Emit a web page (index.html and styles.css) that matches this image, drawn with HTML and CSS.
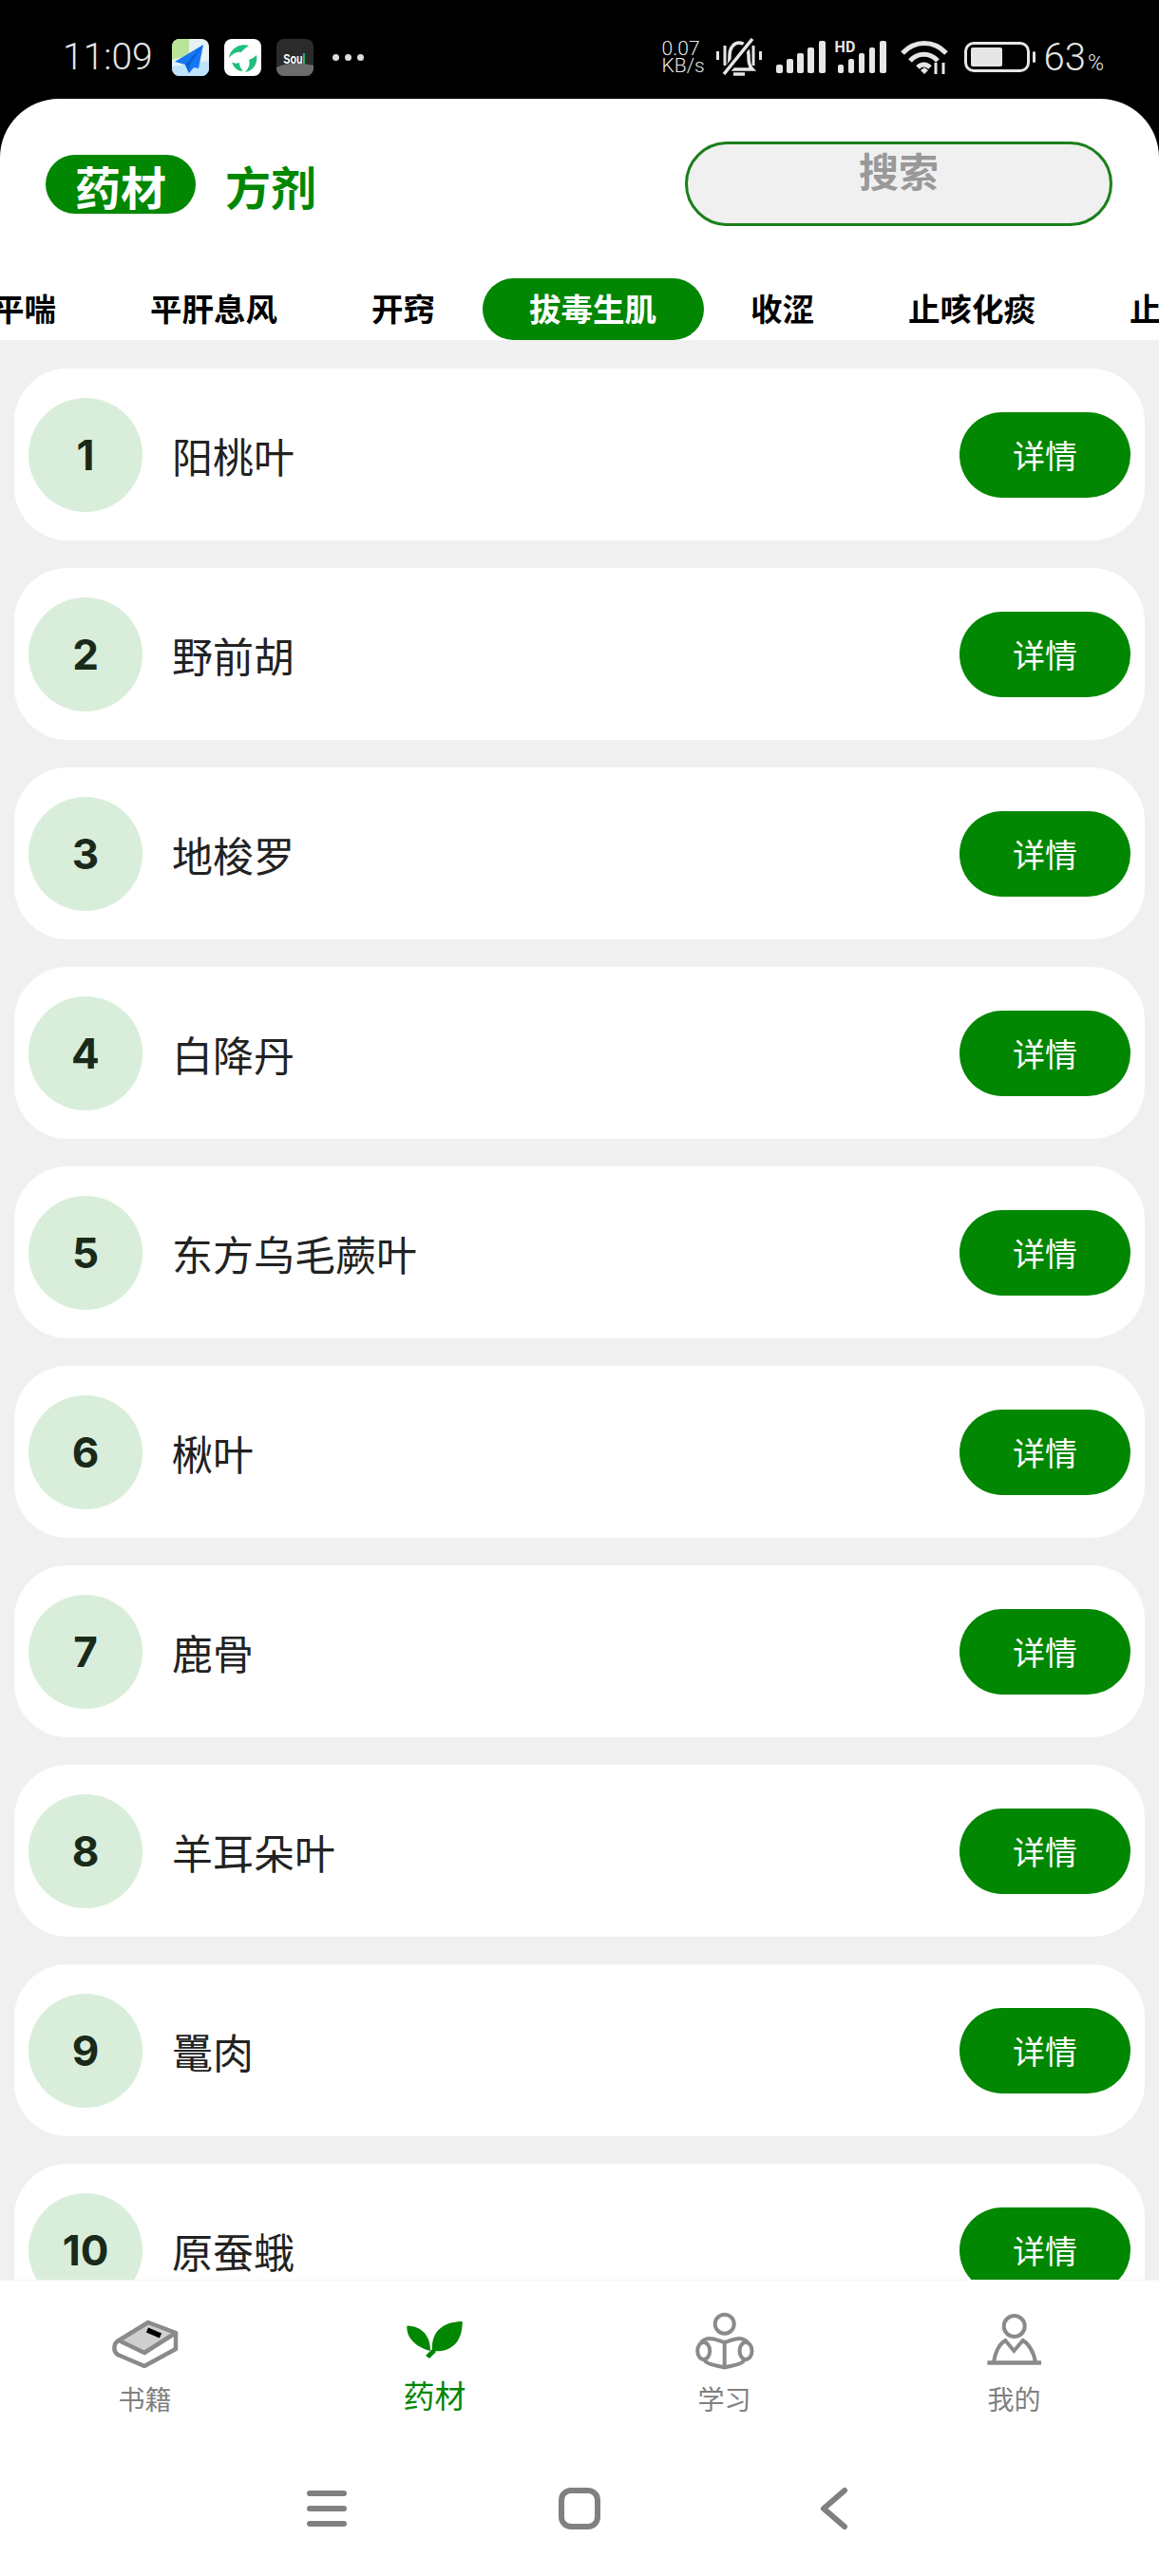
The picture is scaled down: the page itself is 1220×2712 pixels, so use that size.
FILE: index.html
```html
<!DOCTYPE html>
<html lang="zh-CN">
<head>
    <meta charset="UTF-8">
    <meta name="viewport" content="width=device-width, initial-scale=1.0">
    <title>药材</title>
    <link rel="stylesheet" href="styles.css">
</head>
<body>

<div class="phone">
    <div class="status-bar">
        <div class="status-left">
            <span class="clock">11:09</span>
            <svg class="app-icon" viewBox="0 0 39 39">
                <rect width="39" height="39" rx="8" fill="#e6f2f4"/>
                <path d="M0 8a8 8 0 0 1 8-8h10v17L0 22z" fill="#b9e59a"/>
                <path d="M0 29l39-6v8a8 8 0 0 1-8 8H8a8 8 0 0 1-8-8z" fill="#bfe3fa"/>
                <path d="M33 6L3 24l11 3 4 9 5-6 5 1z" fill="#1677f5"/>
                <path d="M33 6L14 27l4 9 1-9z" fill="#0b5fd8"/>
            </svg>
            <svg class="app-icon" viewBox="0 0 39 39">
                <rect width="39" height="39" rx="8" fill="#fff"/>
                <path d="M26 7C16 4 6 11 5 20c4-5 9-7 13-6 2-3 5-5 8-7zM34 17c2 10-5 17-12 18 3-3 6-8 4-13 3-1 6-3 8-5zM8 24c2 7 7 10 12 10-3-3-4-6-4-9-3 1-6 1-8-1z" fill="#1fbf7c"/>
            </svg>
            <svg class="app-icon" viewBox="0 0 39 39">
                <rect width="39" height="39" rx="8" fill="#2b2b2b"/>
                <path d="M0 30c10-5 24-6 39-2v3a8 8 0 0 1-8 8H8a8 8 0 0 1-8-8z" fill="#6b6b6b"/>
                <text class="soul-text" x="10" y="26" transform="scale(.72 1)">Sou<tspan fill="#25c9b0">l</tspan></text>
            </svg>
            <div class="more-dots"><i></i><i></i><i></i></div>
        </div>
        <div class="status-right">
            <div class="net-speed">0.07<br>KB/s</div>
            <svg class="bell" width="48" height="41" viewBox="0 0 48 41" fill="none" stroke="#e6e6e6">
                <path d="M1.5 14v9M9 8v21M39 8v21M46.500 14v9" stroke-width="3"/>
                <path d="M10 33c4-4 4-9 4-15 0-8 5-13 10-13s10 5 10 13c0 6 0 11 4 15z" stroke-width="3.500"/>
                <path d="M18 38h12" stroke-width="3.500"/>
                <path d="M38 1L8 38" stroke="#000" stroke-width="8"/>
                <path d="M38 1L8 38" stroke-width="3.500"/>
            </svg>
            <svg class="signal" width="52" height="34" viewBox="0 0 52 34" fill="#e6e6e6">
                <rect x="0" y="25" width="7" height="9" rx="2"/>
                <rect x="11" y="19" width="7" height="15" rx="2"/>
                <rect x="22" y="13" width="7" height="21" rx="2"/>
                <rect x="33" y="7" width="7" height="27" rx="2"/>
                <rect x="45" y="0" width="7" height="34" rx="2"/>
            </svg>
            <div class="signal-hd">
                <span class="hd-label">HD</span>
                <svg width="54" height="34" viewBox="0 0 54 34" fill="#e6e6e6">
                    <rect x="3" y="25" width="6" height="9" rx="2"/>
                    <rect x="14" y="19" width="6" height="15" rx="2"/>
                    <rect x="25" y="13" width="6" height="21" rx="2"/>
                    <rect x="36" y="7" width="6" height="27" rx="2"/>
                    <rect x="47" y="0" width="7" height="34" rx="2"/>
                </svg>
            </div>
            <svg class="wifi" width="50" height="37" viewBox="0 0 50 37" fill="none" stroke="#e6e6e6" stroke-width="5">
                <path d="M2 14C15 0 35 0 48 14"/>
                <path d="M10 22C18 13 31 13 39 22"/>
                <path d="M18 29c4-4 9-4 13 0"/>
                <path d="M21 32l4-3 4 3-4 4z" fill="#e6e6e6" stroke="none"/>
                <path d="M37 24v12M45 36V24" stroke-width="3"/>
            </svg>
            <div class="battery"><div class="battery-level"></div></div>
            <div class="battery-nub"></div>
            <div class="battery-text">63<small>%</small></div>
        </div>
    </div>

    <div class="header">
        <div class="header-top">
            <div class="type-tab type-tab-active">药材</div>
            <div class="type-tab">方剂</div>
            <div class="search-box">搜索</div>
        </div>
        <div class="category-row">
            <div class="category">平喘</div>
            <div class="category">平肝息风</div>
            <div class="category">开窍</div>
            <div class="category category-active">拔毒生肌</div>
            <div class="category">收涩</div>
            <div class="category">止咳化痰</div>
            <div class="category">止血</div>
        </div>
    </div>

    <div class="list">
        <div class="card"><div class="num">1</div><div class="name">阳桃叶</div><div class="detail-button">详情</div></div>
        <div class="card"><div class="num">2</div><div class="name">野前胡</div><div class="detail-button">详情</div></div>
        <div class="card"><div class="num">3</div><div class="name">地梭罗</div><div class="detail-button">详情</div></div>
        <div class="card"><div class="num">4</div><div class="name">白降丹</div><div class="detail-button">详情</div></div>
        <div class="card"><div class="num">5</div><div class="name">东方乌毛蕨叶</div><div class="detail-button">详情</div></div>
        <div class="card"><div class="num">6</div><div class="name">楸叶</div><div class="detail-button">详情</div></div>
        <div class="card"><div class="num">7</div><div class="name">鹿骨</div><div class="detail-button">详情</div></div>
        <div class="card"><div class="num">8</div><div class="name">羊耳朵叶</div><div class="detail-button">详情</div></div>
        <div class="card"><div class="num">9</div><div class="name">鼍肉</div><div class="detail-button">详情</div></div>
        <div class="card"><div class="num">10</div><div class="name">原蚕蛾</div><div class="detail-button">详情</div></div>
    </div>

    <div class="tab-bar">
        <div class="tab">
            <div class="tab-icon">
                <svg class="book-icon" width="70" height="52" viewBox="0 0 70 52" fill="none" stroke="#8a8a8a" stroke-width="4.500" stroke-linejoin="round">
                    <path d="M38 4L67 15 34 36 7 23z" fill="#cfcfcf"/>
                    <path d="M7 23C1 26 1 35 6 38L34 50 67 32V15"/>
                    <path d="M37 12L51 18" stroke="#000" stroke-width="5.500"/>
                </svg>
            </div>
            <span>书籍</span>
        </div>
        <div class="tab tab-active">
            <div class="tab-icon">
                <svg width="65" height="45" viewBox="0 0 65 45" fill="#018701">
                    <path d="M3.500 8.500C2 20 12 31 28 35 28 20 20 9 3.500 8.500z"/>
                    <path d="M61.700 4C45 4 28 12 30 35 45 37 62 30 61.700 4z"/>
                    <path d="M30 33l4 3-7 7-4-3z"/>
                </svg>
            </div>
            <span>药材</span>
        </div>
        <div class="tab">
            <div class="tab-icon">
                <svg width="66" height="66" viewBox="0 0 66 66" fill="none" stroke="#8a8a8a" stroke-width="4">
                    <circle cx="32.700" cy="15.700" r="10"/>
                    <path d="M32.700 35C26 33 22 31 17 31 13 31 10 33 8 35M32.700 35C39 33 44 31 48 31 52 31 55 33 57 35"/>
                    <ellipse cx="10.700" cy="44" rx="6.500" ry="9"/>
                    <ellipse cx="55" cy="44" rx="6.500" ry="9"/>
                    <path d="M11 53C14 58 18 58 32.700 61.500 47 58 51 58 54 53M32.700 35V61.500"/>
                </svg>
            </div>
            <span>学习</span>
        </div>
        <div class="tab">
            <div class="tab-icon">
                <svg width="66" height="60" viewBox="0 0 66 60" fill="none" stroke="#8a8a8a" stroke-width="4">
                    <circle cx="32.700" cy="15" r="11"/>
                    <path d="M11 53C13 41 18 33 23.300 30L32.300 41 41.700 30C47 33 53 41 55 53"/>
                    <path d="M4.300 53.500H61" stroke-width="4.500"/>
                </svg>
            </div>
            <span>我的</span>
        </div>
    </div>

    <div class="nav-bar">
        <svg class="nav-menu" width="44" height="40" viewBox="0 0 44 40" fill="#808080">
            <rect x="1" y="1" width="42" height="6" rx="3"/>
            <rect x="1" y="17" width="42" height="6" rx="3"/>
            <rect x="1" y="33" width="42" height="6" rx="3"/>
        </svg>
        <svg class="nav-home" width="46" height="46" viewBox="0 0 46 46" fill="none" stroke="#808080" stroke-width="6">
            <rect x="4" y="4" width="38" height="38" rx="10"/>
        </svg>
        <svg width="30" height="46" viewBox="0 0 30 46" fill="none" stroke="#808080" stroke-width="6" stroke-linecap="round" stroke-linejoin="round">
            <path d="M26 4L4 23 26 42"/>
        </svg>
    </div>
</div>

</body>
</html>
```

FILE: styles.css
```css
body {
    margin: 0;
    background-color: #000;
    font-family: "Noto Sans CJK SC", "Noto Sans", sans-serif;
}

.phone {
    width: 1220px;
    height: 2712px;
    display: flex;
    flex-direction: column;
    overflow: hidden;
    background-color: #000;
}

/* status bar */
.status-bar {
    height: 104px;
    flex: none;
    display: flex;
    justify-content: space-between;
    align-items: center;
    padding: 16px 58px 0 66px;
    box-sizing: border-box;
    color: #e6e6e6;
    font-family: Roboto, sans-serif;
    font-weight: 300;
}

.status-left, .status-right {
    display: flex;
    align-items: center;
}

.clock {
    font-size: 39px;
    width: 115px;
}

.app-icon {
    width: 39px;
    height: 39px;
    margin-right: 16px;
}

.soul-text {
    font-family: "Liberation Sans", sans-serif;
    font-size: 15px;
    font-weight: 700;
    fill: #fff;
}

.more-dots {
    display: flex;
    gap: 6px;
    margin-left: 4px;
}

.more-dots i {
    width: 7px;
    height: 7px;
    border-radius: 50%;
    background-color: #ddd;
}

.net-speed {
    font-size: 21px;
    line-height: 18px;
    width: 57px;
}

.bell {
    margin-right: 15px;
}

.signal {
    margin-right: 10px;
}

.signal-hd {
    position: relative;
    margin-right: 15px;
}

.signal-hd svg {
    display: block;
}

.hd-label {
    position: absolute;
    left: 0;
    top: -1px;
    font-size: 16px;
    line-height: 16px;
    font-weight: 700;
}

.wifi {
    margin-right: 17px;
}

.battery {
    width: 69px;
    height: 32px;
    box-sizing: border-box;
    border: 3px solid #e6e6e6;
    border-radius: 10px;
    padding: 3px 4px;
}

.battery-level {
    width: 33px;
    height: 20px;
    background-color: #e6e6e6;
    border-radius: 2px;
}

.battery-nub {
    width: 3px;
    height: 12px;
    margin-left: 3px;
    background-color: #e6e6e6;
    border-radius: 2px;
}

.battery-text {
    font-size: 40px;
    margin-left: 9px;
}

.battery-text small {
    font-size: 23px;
    margin-left: 2px;
}

/* header */
.header {
    flex: none;
    height: 254px;
    background-color: #fff;
    border-radius: 62px 62px 0 0;
}

.header-top {
    display: flex;
    align-items: center;
    height: 89px;
    padding: 45px 49px 0 48px;
}

.type-tab {
    height: 62px;
    line-height: 64px;
    padding: 0 31px;
    font-size: 48px;
    font-weight: 700;
    color: #018701;
    border-radius: 31px;
}

.type-tab-active {
    background-color: #018701;
    color: #fff;
}

.search-box {
    margin-left: auto;
    width: 450px;
    height: 89px;
    box-sizing: border-box;
    border: 3px solid #1b7f1b;
    border-radius: 45px;
    background-color: #f0f0f0;
    padding-top: 6px;
    text-align: center;
    font-size: 42px;
    line-height: 42px;
    font-weight: 700;
    color: #999;
}

.category-row {
    display: flex;
    margin: 55px 0 0 -57px;
}

.category {
    flex: none;
    height: 65px;
    line-height: 62px;
    padding: 0 50px 0 49px;
    font-size: 33.500px;
    font-weight: 700;
    color: #000;
    border-radius: 33px;
}

.category-active {
    background-color: #018701;
    color: #fff;
}

/* list */
.list {
    flex: 1;
    min-height: 0;
    overflow: hidden;
    background-color: #f0f0f0;
    padding: 30px 15px 0;
    display: flex;
    flex-direction: column;
    gap: 29px;
}

.card {
    flex: none;
    height: 181px;
    display: flex;
    align-items: center;
    background-color: #fff;
    border-radius: 56px;
    padding: 0 15px;
}

.num {
    width: 120px;
    height: 120px;
    line-height: 120px;
    border-radius: 50%;
    background-color: #d9eeda;
    color: #1a2a1a;
    text-align: center;
    font-family: Inter, sans-serif;
    font-size: 44px;
    font-weight: 700;
}

.name {
    flex: 1;
    margin-left: 31px;
    font-size: 43px;
    color: #222;
}

.detail-button {
    width: 180px;
    height: 90px;
    line-height: 90px;
    border-radius: 45px;
    background-color: #018701;
    color: #fff;
    text-align: center;
    font-size: 34px;
}

/* bottom tabs */
.tab-bar {
    flex: none;
    height: 172px;
    display: flex;
    background-color: #fff;
    border-top: 1px solid #f4f4f4;
    box-sizing: border-box;
}

.tab {
    width: 305px;
    text-align: center;
    font-size: 28px;
    color: #808080;
}

.tab-icon {
    height: 104px;
    padding-top: 22px;
    box-sizing: border-box;
    display: flex;
    justify-content: center;
    align-items: center;
}

.book-icon {
    margin-top: 5px;
}

.tab-active {
    font-size: 33px;
    line-height: 36px;
    color: #018701;
}

.tab-active .tab-icon {
    height: 102px;
    padding-top: 20px;
}

.nav-bar {
    flex: none;
    height: 140px;
    background-color: #fff;
    display: flex;
    align-items: center;
    padding: 0 0 2px 322px;
    box-sizing: border-box;
}

.nav-menu {
    margin-right: 221px;
}

.nav-home {
    margin-right: 230px;
}
```
